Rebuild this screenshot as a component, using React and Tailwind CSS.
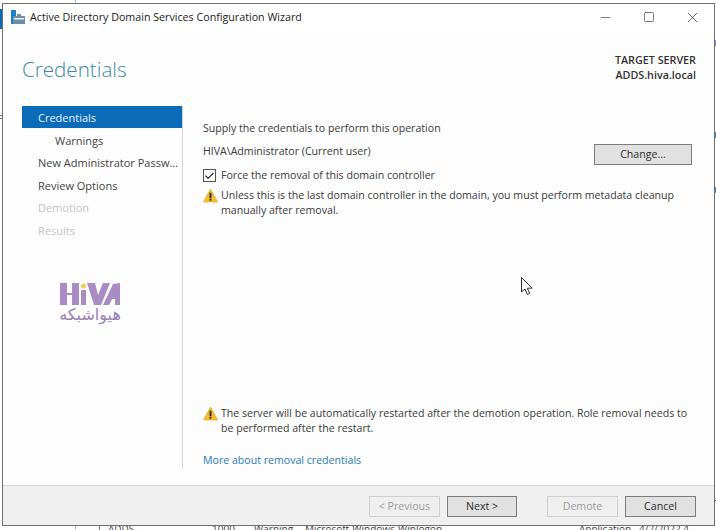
import { Check, Minus, Square, X } from "lucide-react";

const steps = [
  { label: "Credentials", active: true },
  { label: "Warnings", sub: true },
  { label: "New Administrator Passw..." },
  { label: "Review Options" },
  { label: "Demotion", off: true },
  { label: "Results", off: true },
];

function WarnIcon() {
  return (
    <svg width="15" height="15" viewBox="0 0 16 15" className="shrink-0">
      <path d="M8 .6 15.6 14.400H.4Z" fill="#f5bd2b" stroke="#d9a016" strokeWidth=".6" />
      <rect x="7" y="4.600" width="2" height="5.600" fill="#2b2b2b" />
      <rect x="7" y="11" width="2" height="2" fill="#2b2b2b" />
    </svg>
  );
}

function WizardButton({ children, off, className = "" }) {
  return (
    <div
      className={
        off
          ? "h-[21px] shrink-0 flex items-center justify-center border border-[#cfcfcf] bg-[#efefef] text-[#9a9a9a] " + className
          : "h-[21px] shrink-0 flex items-center justify-center border border-[#7c7c7c] bg-[#e1e1e1] text-[#2b2b2b] " + className
      }
    >
      {children}
    </div>
  );
}

export default function App() {
  return (
    <div className="relative w-[716px] h-[530px] overflow-hidden bg-white font-['Open_Sans','Noto_Sans',sans-serif] text-[10.6px] text-[#333333]">

      {/* fenetre de fond */}
      <div className="absolute left-0 top-[9px] w-[2px] h-[20px] bg-[#0a6cb8]" />
      <div className="absolute left-0 top-[115px] w-[2px] h-px bg-[#777777]" />
      <div className="absolute left-0 top-[118px] w-[2px] h-px bg-[#777777]" />
      <div className="absolute left-[75px] top-0 w-px h-[3px] bg-[#bdbdbd]" />
      <div className="absolute left-[75px] top-[526px] w-px h-[4px] bg-[#bdbdbd]" />
      <div className="absolute left-[99px] top-[526px] w-px h-[4px] bg-[#6f6f6f]" />
      <div className="absolute left-[715px] top-[40px] w-px h-[6px] bg-[#8f8fc0]" />
      <div className="absolute left-[715px] top-[132px] w-px h-[6px] bg-[#3f88c0]" />
      <div className="absolute left-[715px] top-[187px] w-px h-[6px] bg-[#3f88c0]" />
      <div className="absolute left-[715px] top-[500px] w-px h-px bg-[#333333]" />
      <div className="absolute left-[108px] top-[522px] text-[10px] text-[#444444] whitespace-nowrap">ADDS</div>
      <div className="absolute left-[212px] top-[522px] text-[10px] text-[#444444] whitespace-nowrap">1000</div>
      <div className="absolute left-[254px] top-[522px] text-[10px] text-[#444444] whitespace-nowrap">Warning</div>
      <div className="absolute left-[305px] top-[522px] text-[10px] text-[#444444] whitespace-nowrap">Microsoft-Windows-Winlogon</div>
      <div className="absolute left-[579px] top-[522px] text-[10px] text-[#444444] whitespace-nowrap">Application</div>
      <div className="absolute left-[639px] top-[522px] text-[10px] text-[#444444] whitespace-nowrap">4/2/2022 4</div>

      {/* ventana */}
      <div className="absolute left-[2px] top-[3px] w-[713px] h-[523px] flex flex-col border border-[#707070] bg-[#fdfdfd]">

        {/* barra titulo */}
        <div className="h-[28px] shrink-0 flex items-center bg-white pl-[8px] pb-[2px]">
          <svg width="14" height="15" viewBox="0 0 14 15" className="shrink-0">
            <rect x="0" y="0" width="5" height="14" fill="#1f7fc8" />
            <rect x="2" y="6" width="12" height="8" fill="#6f8fa8" />
            <rect x="3" y="8" width="10" height="1.500" fill="#e8f0f6" />
            <rect x="6" y="4" width="4" height="2" fill="#6f8fa8" />
          </svg>
          <span className="ml-[5px] text-[10.7px] text-[#222222]">Active Directory Domain Services Configuration Wizard</span>
          <div className="ml-auto flex items-center text-[#333333]">
            <Minus size={15} strokeWidth={1} className="mr-[30px]" />
            <Square size={12} strokeWidth={1.300} className="mr-[29px]" />
            <X size={17} strokeWidth={1} className="mr-[13px]" />
          </div>
        </div>

        {/* cabecera */}
        <div className="h-[74px] shrink-0 flex justify-between pl-[19px] pr-[18px]">
          <h1 className="mt-[22px] text-[20.600px] leading-[30px] font-light text-[#3c8aa8]">Credentials</h1>
          <div className="mt-[21px] text-right text-[10.750px] leading-[15px] font-semibold text-[#333333]">
            <div>TARGET SERVER</div>
            <div>ADDS.hiva.local</div>
          </div>
        </div>

        {/* cuerpo */}
        <div className="flex-1 flex min-h-0">

          <div className="w-[161px] ml-[19px] shrink-0 h-[362px] border-r border-[#d4d4d4] text-[11px]">
            {steps.map((step) => (
              <div
                key={step.label}
                className={
                  step.active
                    ? "h-[22px] mb-px flex items-center pl-[16px] pt-[2px] bg-[#0a6cb8] text-[#e8f2fa]"
                    : step.sub
                      ? "h-[22px] mb-px flex items-center pl-[33px] pt-[2px] text-[#444444]"
                      : step.off
                        ? "h-[21.400px] mb-px flex items-center pl-[16px] pt-[2px] text-[#c4c4c4]"
                        : "h-[21.400px] mb-px flex items-center pl-[16px] pt-[2px] text-[#444444]"
                }
              >
                {step.label}
              </div>
            ))}

            {/* logo */}
            <div className="mt-[42px] flex flex-col items-center pr-[24px]">
              <svg width="60" height="22" viewBox="0 0 60 22" className="shrink-0">
                <g fill="#a88cc2">
                  <rect x="0" y="0" width="7" height="22" />
                  <rect x="7" y="10" width="5" height="2" />
                  <rect x="12" y="0" width="7" height="22" />
                  <rect x="21" y="7" width="5" height="15" />
                  <polygon points="27,0 35,0 38,12 43,0 50,0 41,22 34,22" />
                  <polygon points="43,22 53,1 60,0 60,22 55,22 55,16 52,16 49,22" />
                </g>
                <circle cx="23.500" cy="3" r="2.500" fill="#f2cf5b" />
              </svg>
              <div dir="rtl" className="mt-[1px] text-[16px] leading-[18px] font-['DejaVu_Sans',sans-serif] text-[#9a7fb5]">هیواشبکه</div>
            </div>
          </div>

          {/* contenido */}
          <div className="flex-1 h-[362px] flex flex-col pl-[20px] pr-[22px] text-[#3a3a3a] whitespace-nowrap">
            <div className="mt-[15px] leading-[15px]">Supply the credentials to perform this operation</div>

            <div className="mt-[8px] flex items-start justify-between">
              <span className="leading-[15px]">HIVA\Administrator (Current user)</span>
              <WizardButton className="w-[98px]">Change...</WizardButton>
            </div>

            <div className="mt-[3px] flex items-center gap-[5px] leading-[15px]">
              <div className="w-[13px] h-[13px] flex items-center justify-center border border-[#555555] bg-white">
                <Check size={12} strokeWidth={2.400} className="text-[#222222]" />
              </div>
              <span>Force the removal of this domain controller</span>
            </div>

            <div className="mt-[5px] flex items-start gap-[3px] leading-[15px]">
              <WarnIcon />
              <p>Unless this is the last domain controller in the domain, you must perform metadata cleanup<br />manually after removal.</p>
            </div>

            <div className="mt-auto flex items-start gap-[3px] leading-[15px]">
              <WarnIcon />
              <p>The server will be automatically restarted after the demotion operation. Role removal needs to<br />be performed after the restart.</p>
            </div>

            <a className="mt-[17px] leading-[15px] text-[#2a7ab8]">More about removal credentials</a>
          </div>
        </div>

        {/* pie */}
        <div className="h-[40px] shrink-0 flex items-center pt-[2px] bg-[#f0f0f0] border-t border-[#d6d6d6] pl-[366px]">
          <WizardButton off className="w-[71px]">&lt; Previous</WizardButton>
          <WizardButton className="w-[70px] ml-[7px]">Next &gt;</WizardButton>
          <WizardButton off className="w-[71px] ml-[30px]">Demote</WizardButton>
          <WizardButton className="w-[71px] ml-[7px]">Cancel</WizardButton>
        </div>
      </div>

      {/* puntero */}
      <svg width="13" height="19" viewBox="0 0 13 19" className="absolute left-[521px] top-[277px]">
        <path d="M.5.5V15L4 12l2.300 5.500 2.400-1L6.400 11.200h4.800Z" fill="#ffffff" stroke="#333333" strokeWidth="1" />
      </svg>
    </div>
  );
}
